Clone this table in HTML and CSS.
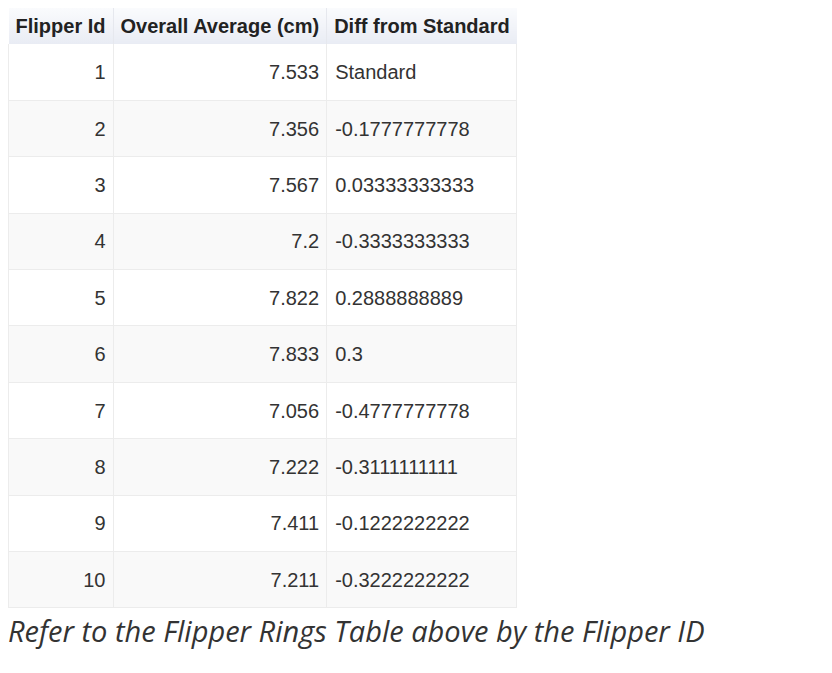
FILE: index.html
```html
<!DOCTYPE html>
<html>
<head>
<meta charset="utf-8">
<link rel="stylesheet" href="styles.css">
</head>
<body>
<table class="data">
  <thead>
    <tr><th>Flipper Id</th><th>Overall Average (cm)</th><th>Diff from Standard</th></tr>
  </thead>
  <tbody>
    <tr><td class="num">1</td><td class="num">7.533</td><td>Standard</td></tr>
    <tr><td class="num">2</td><td class="num">7.356</td><td>-0.1777777778</td></tr>
    <tr><td class="num">3</td><td class="num">7.567</td><td>0.03333333333</td></tr>
    <tr><td class="num">4</td><td class="num">7.2</td><td>-0.3333333333</td></tr>
    <tr><td class="num">5</td><td class="num">7.822</td><td>0.2888888889</td></tr>
    <tr><td class="num">6</td><td class="num">7.833</td><td>0.3</td></tr>
    <tr><td class="num">7</td><td class="num">7.056</td><td>-0.4777777778</td></tr>
    <tr><td class="num">8</td><td class="num">7.222</td><td>-0.3111111111</td></tr>
    <tr><td class="num">9</td><td class="num">7.411</td><td>-0.1222222222</td></tr>
    <tr><td class="num">10</td><td class="num">7.211</td><td>-0.3222222222</td></tr>
  </tbody>
</table>
<p class="caption">Refer to the Flipper Rings Table above by the Flipper ID</p>
</body>
</html>
```

FILE: styles.css
```css
body {
  margin: 8px;
  background: #ffffff;
  font-family: "Liberation Sans", Arial, sans-serif;
  color: #333333;
}
.data {
  border-collapse: collapse;
  font-size: 20px;
}
.data th {
  height: 36px;
  padding: 0 7px;
  font-weight: bold;
  text-align: center;
  color: #222222;
  background: linear-gradient(#fafbfd, #e9ecf4);
  border-left: 1px solid #e6e8ee;
  border-right: 1px solid #e6e8ee;
  box-sizing: border-box;
}
.data th:first-child { border-left: none; }
.data th:last-child { border-right: none; }
.data td {
  height: 56.4px;
  padding: 1px 8px 0;
  border: 1px solid #ececec;
  box-sizing: border-box;
  text-align: left;
  color: #333333;
}
.data tbody tr:first-child td { border-top: none; }
.data tbody tr:nth-child(even) td { background: #f9f9f9; }
.data td.num { text-align: right; padding-right: 7px; }
.caption {
  margin: 6px 0 0;
  font-family: "Open Sans", sans-serif;
  font-style: italic;
  font-size: 29px;
  line-height: 1.2;
  color: #333333;
}
```
